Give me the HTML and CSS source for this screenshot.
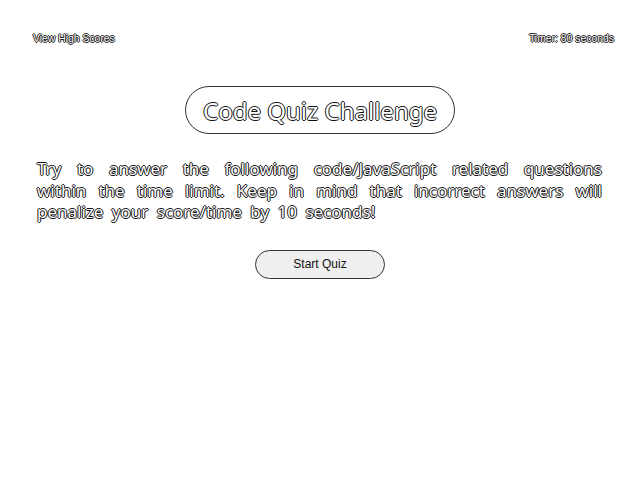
FILE: index.html
```html
<!DOCTYPE html>
<html lang="en">
<head>
<meta charset="utf-8">
<title>Code Quiz</title>
<link rel="stylesheet" href="styles.css">
</head>
<body>
<header class="top">
  <a class="scores" href="#">View High Scores</a>
  <span class="timer">Timer: 80 seconds</span>
</header>
<main class="main">
  <h1 class="title">Code Quiz Challenge</h1>
  <p class="intro">Try to answer the following code/JavaScript related questions within the time limit. Keep in mind that incorrect answers will penalize your score/time by 10 seconds!</p>
  <button class="start" type="button">Start Quiz</button>
</main>
</body>
</html>
```
FILE: styles.css
```css
html, body {
  margin: 0;
  padding: 0;
  background: #fff;
}
body {
  width: 640px;
  height: 478px;
}
.top {
  display: flex;
  justify-content: space-between;
  align-items: center;
  padding: 31px 26px 0 33px;
  height: 14px;
  font-family: "Liberation Sans", Arial, sans-serif;
  font-size: 10.4px;
}
.scores, .timer, .title, .intro {
  color: #fff;
  text-decoration: none;
  text-shadow: -1px 0 #111, 1px 0 #111, 0 -1px #111, 0 1px #111;
}
.main {
  display: flex;
  flex-direction: column;
  align-items: center;
  padding-top: 41px;
}
.title {
  margin: 0;
  box-sizing: border-box;
  width: 270px;
  height: 48px;
  border: 1px solid #333;
  border-radius: 24px;
  display: flex;
  align-items: center;
  justify-content: center;
  font-family: "Noto Sans", sans-serif;
  font-size: 24px;
  font-weight: normal;
}
.intro {
  margin: 24px 38px 0 37px;
  font-family: "Noto Sans", sans-serif;
  font-size: 17px;
  line-height: 21.6px;
  word-spacing: 4px;
  text-align: justify;
}
.start {
  margin-top: 27px;
  width: 130px;
  height: 29px;
  border: 1px solid #333;
  border-radius: 15px;
  background: #efefef;
  font-family: "Liberation Sans", Arial, sans-serif;
  font-size: 12px;
  color: #111;
}
```
